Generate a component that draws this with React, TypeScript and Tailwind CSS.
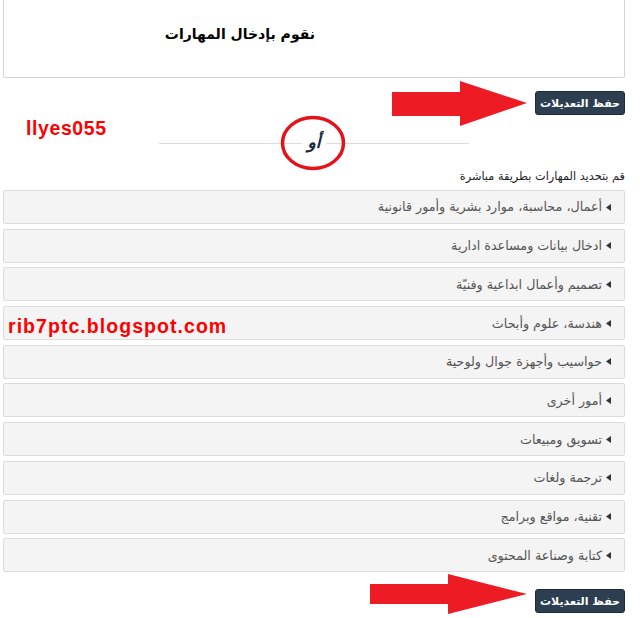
import React from "react";

const items = [
  "أعمال، محاسبة، موارد بشرية وأمور قانونية",
  "ادخال بيانات ومساعدة ادارية",
  "تصميم وأعمال ابداعية وفنيّة",
  "هندسة، علوم وأبحاث",
  "حواسيب وأجهزة جوال ولوحية",
  "أمور أخرى",
  "تسويق ومبيعات",
  "ترجمة ولغات",
  "تقنية، مواقع وبرامج",
  "كتابة وصناعة المحتوى",
];

const arabic = { fontFamily: '"DejaVu Sans", "Noto Sans", sans-serif' };

function SaveButton() {
  return (
    <button
      dir="rtl"
      className="w-[90px] h-[24px] bg-[#2c3e50] border border-[#1b2836] rounded-[3px] text-white text-[11px] font-bold leading-none flex items-center justify-center"
      style={arabic}
    >
      حفظ التعديلات
    </button>
  );
}

function Caret() {
  return (
    <svg width="5" height="7" viewBox="0 0 5 7" className="shrink-0">
      <polygon points="5,0 0,3.5 5,7" fill="#333" />
    </svg>
  );
}

export default function App() {
  return (
    <div className="relative w-[640px] h-[618px] bg-white overflow-hidden" style={arabic}>
      <div className="pl-[3px] pr-[15px]">
        {/* top box */}
        <div
          dir="rtl"
          className="h-[78px] border border-t-0 border-[#d4d4d4] rounded-b-[2px] bg-white pt-[23px] pr-[309px] text-[14px] font-bold text-black leading-[22px]"
        >
          نقوم بإدخال المهارات
        </div>

        {/* save row */}
        <div className="mt-[13px] flex justify-end">
          <SaveButton />
        </div>

        {/* or divider */}
        <div className="h-[55px] pt-[28px] flex justify-center">
          <div className="relative w-[310px] h-px bg-[#dcdcdc]">
            <span
              dir="rtl"
              className="absolute left-1/2 -translate-x-1/2 -top-[12px] bg-white px-[6px] text-[17px] font-bold italic text-[#1a2740] leading-[22px]"
            >
              أو
            </span>
          </div>
        </div>

        {/* label */}
        <div dir="rtl" className="h-[14px] text-[11.3px] leading-[14px] text-[#222]">
          قم بتحديد المهارات بطريقة مباشرة
        </div>

        {/* accordion */}
        <div className="mt-[6px] flex flex-col gap-[4.7px]">
          {items.map((t) => (
            <div
              key={t}
              dir="rtl"
              className="h-[34px] bg-[#f4f4f4] border border-[#dcdcdc] rounded-[2px] flex items-center gap-[4px] pr-[13px] text-[12.7px] text-[#555]"
            >
              <Caret />
              <span>{t}</span>
            </div>
          ))}
        </div>

        {/* bottom save */}
        <div className="mt-[17px] flex justify-end">
          <SaveButton />
        </div>
      </div>

      {/* annotations */}
      <svg className="absolute left-[392px] top-[80px]" width="135" height="47" viewBox="0 0 135 47">
        <polygon points="0,12 68,12 68,1 135,23 68,46 68,36 0,36" fill="#ed1c24" />
      </svg>
      <svg className="absolute left-[370px] top-[573px]" width="157" height="45" viewBox="0 0 157 45">
        <polygon points="0,11 78,11 78,1 157,21 78,41 78,31 0,31" fill="#ed1c24" />
      </svg>
      <svg className="absolute left-[280px] top-[115px]" width="66" height="56" viewBox="0 0 66 56">
        <ellipse cx="33" cy="28" rx="30.5" ry="25.5" fill="none" stroke="#e4121b" strokeWidth="3.5" />
      </svg>
      <div
        className="absolute left-[26px] top-[116px] text-[19.5px] font-bold text-[#f00] tracking-[0.6px] leading-[24px]"
        style={{ fontFamily: '"Liberation Sans", Arial, sans-serif' }}
      >
        llyes055
      </div>
      <div
        className="absolute left-[8px] top-[314px] text-[19.5px] font-bold text-[#f00] tracking-[1.05px] leading-[24px]"
        style={{ fontFamily: '"Liberation Sans", Arial, sans-serif' }}
      >
        rib7ptc.blogspot.com
      </div>
    </div>
  );
}
